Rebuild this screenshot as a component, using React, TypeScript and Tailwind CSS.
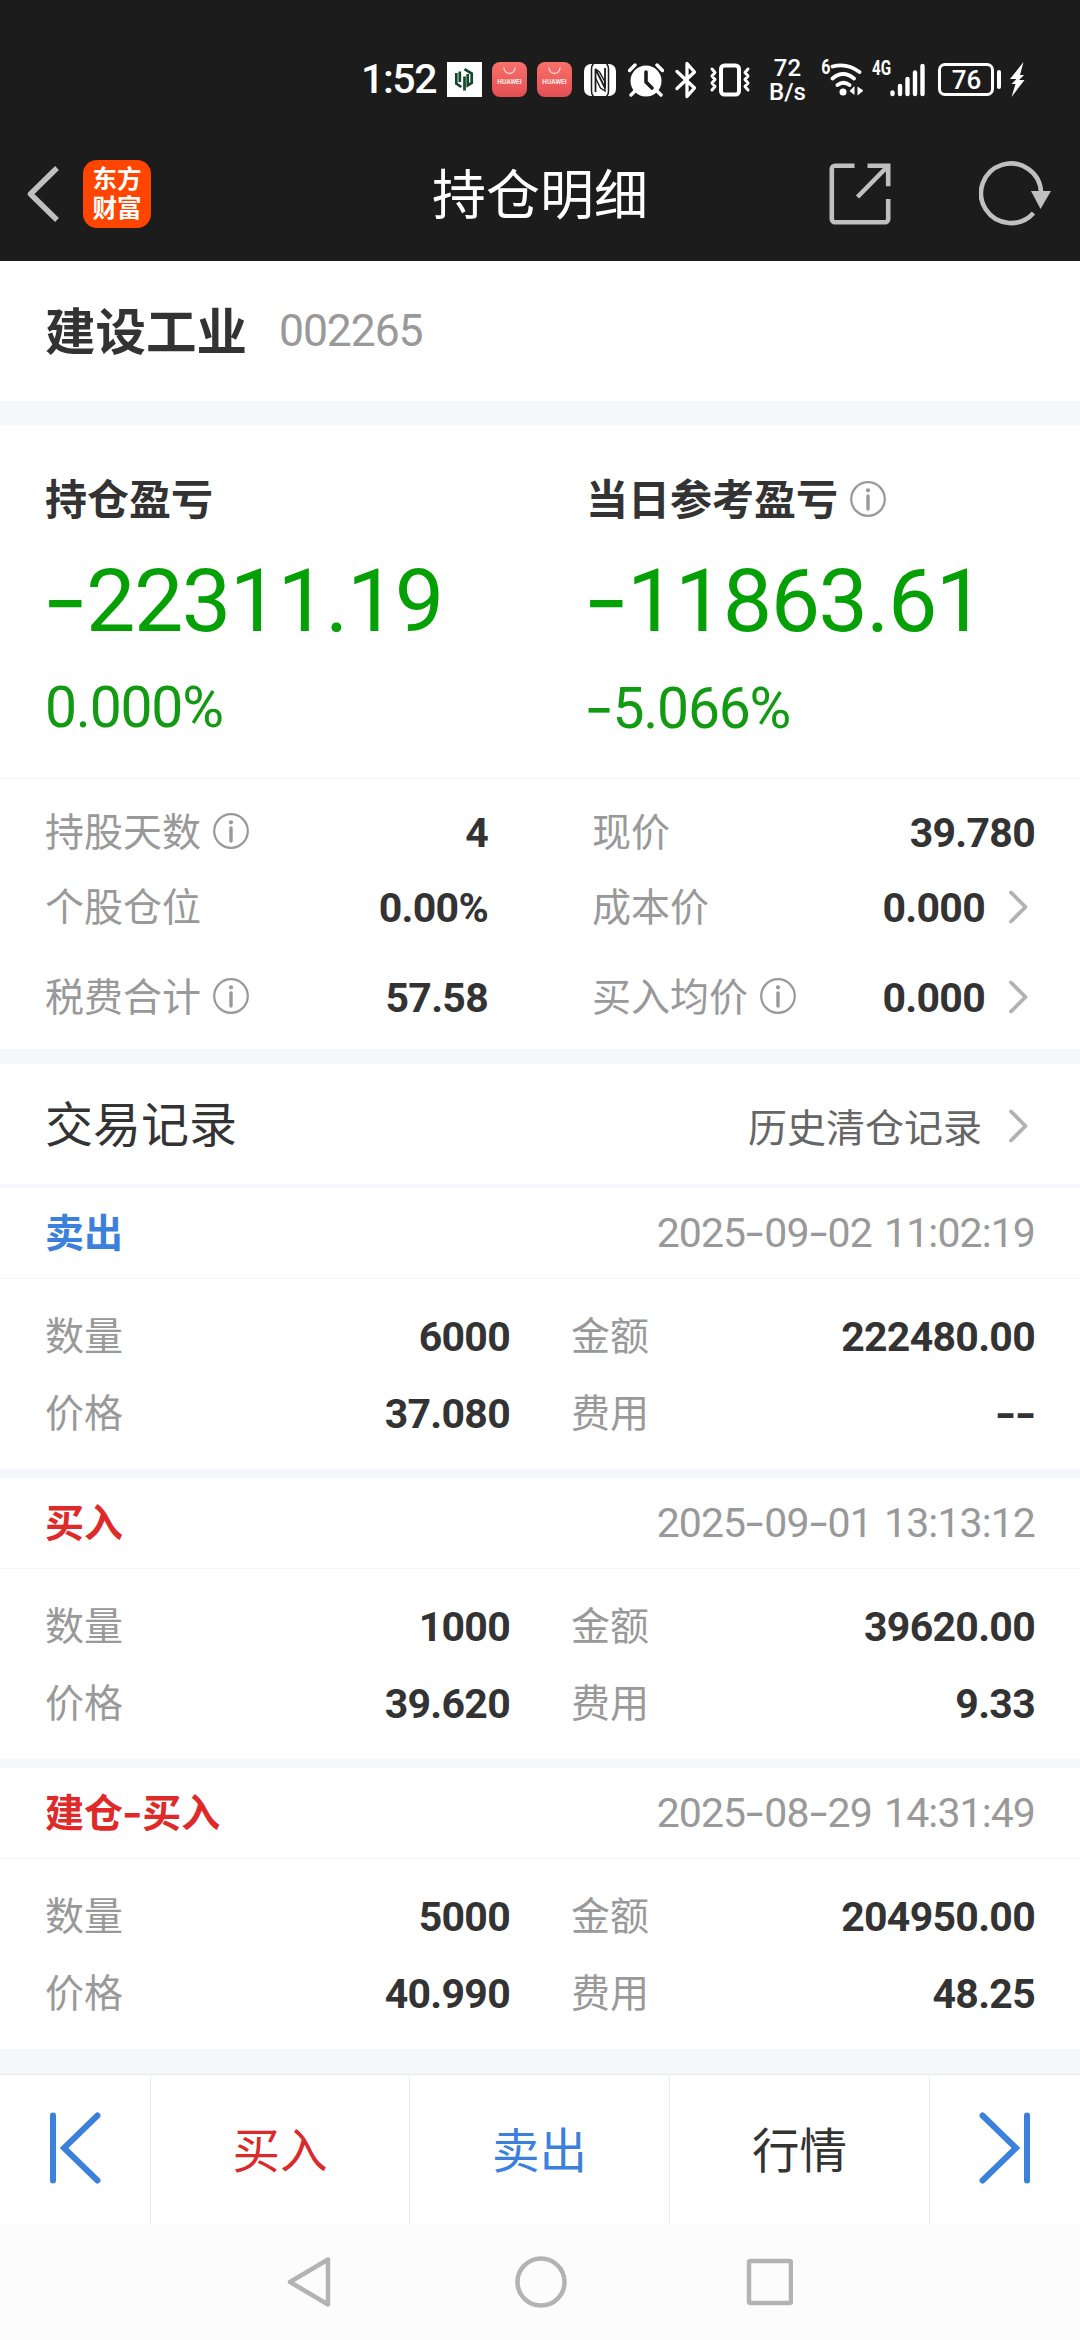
import type { ReactNode } from 'react';

interface TradeRecord {
  type: string;
  color: string;
  time: string;
  amount: string;
  price: string;
  total: string;
  fee: string;
}

const records: TradeRecord[] = [
  {
    type: '卖出',
    color: 'text-[#3b81dc]',
    time: '2025-09-02 11:02:19',
    amount: '6000',
    price: '37.080',
    total: '222480.00',
    fee: '--',
  },
  {
    type: '买入',
    color: 'text-[#e02a2a]',
    time: '2025-09-01 13:13:12',
    amount: '1000',
    price: '39.620',
    total: '39620.00',
    fee: '9.33',
  },
  {
    type: '建仓-买入',
    color: 'text-[#e02a2a]',
    time: '2025-08-29 14:31:49',
    amount: '5000',
    price: '40.990',
    total: '204950.00',
    fee: '48.25',
  },
];

// Hyphens use the wider Inter dash
function Num({ children, className = '' }: { children: string; className?: string }) {
  return (
    <span className={`whitespace-pre ${className}`}>
      {children.split(/(-)/).map((part, index) =>
        part === '-' ? (
          <span key={index} className="mr-[0.025em] inline-block scale-x-115 font-['Inter'] leading-none">
            -
          </span>
        ) : (
          part
        ),
      )}
    </span>
  );
}

function InfoIcon() {
  return (
    <svg width="36" height="36" viewBox="0 0 36 36" fill="none" className="shrink-0">
      <circle cx="18" cy="18" r="16.8" stroke="#999" strokeWidth="2.2" />
      <circle cx="18" cy="9.3" r="2.1" fill="#999" />
      <path d="M18 15v13" stroke="#999" strokeWidth="3.4" strokeLinecap="round" />
    </svg>
  );
}

function Chevron() {
  return (
    <svg width="19" height="34" viewBox="0 0 19 34" fill="none" className="shrink-0">
      <path d="M2 2.5 16.5 17 2 31.5" stroke="#b2b2b2" strokeWidth="3.8" strokeLinecap="round" strokeLinejoin="round" />
    </svg>
  );
}

function HuaweiApp() {
  return (
    <div className="flex h-[35px] w-[35px] flex-col items-center rounded-[8px] bg-gradient-to-b from-[#f9706a] to-[#e34f54]">
      <svg width="13" height="8" viewBox="0 0 13 8" fill="none" className="mt-[5px]">
        <path d="M1 1a5.5 5.5 0 0 0 11 0" stroke="#ffd9d5" strokeWidth="1.3" strokeLinecap="round" />
      </svg>
      <span className="mt-[4px] text-[6.5px] leading-[7px] font-bold text-[#ffe9e6]">HUAWEI</span>
    </div>
  );
}

function StatusBar() {
  return (
    <div className="flex h-[127px] items-center pt-[32px] pl-[361px] text-white">
      <Num className="w-[86px] text-[41px] leading-none font-medium tracking-[-1.4px]">1:52</Num>
      <svg width="35" height="35" viewBox="0 0 35 35" fill="none">
        <path d="M0 0h35v35H0z" fill="#fff" />
        <path d="M9.3 11v10.500l5 3.500M17.500 14.500V28.500M12.800 9.500v10.500M17.500 7.200l7.200 4.300v9.500l-4 2.300V12" stroke="#12492c" strokeWidth="2.700" />
      </svg>
      <div className="ml-[10px] flex gap-[10px]">
        <HuaweiApp />
        <HuaweiApp />
      </div>
      <svg width="32" height="32" viewBox="0 0 32 32" fill="none" className="ml-[12px]">
        <rect width="32" height="32" rx="7" fill="#fff" />
        <path d="M9.500 0Q7.500 1 7.500 5v22q0 4 2 5M22.500 0q2 1 2 5v22q0 4-2 5" stroke="#1c1c1c" strokeWidth="1.500" />
        <path d="M11.500 28V5L21 24V4" stroke="#1c1c1c" strokeWidth="1.800" />
        <path d="M11.500 5l4 3L21 18v9l-4.500-3-5-10" stroke="#1c1c1c" strokeWidth="1.400" />
      </svg>
      <svg width="36" height="34" viewBox="0 0 36 34" fill="none" className="ml-[12px]">
        <circle cx="18" cy="18" r="15.500" fill="#fff" />
        <path d="M1.500 7.500 7 2M34.500 7.500 29 2M7 28l-4 4M29 28l4 4" stroke="#fff" strokeWidth="3.400" strokeLinecap="round" />
        <path d="M18 9v10l6 6" stroke="#1c1c1c" strokeWidth="3.600" strokeLinecap="round" strokeLinejoin="round" />
      </svg>
      <svg width="24" height="38" viewBox="0 0 24 38" fill="none" className="ml-[10px]">
        <path d="M3 10.500 20.500 27 13 35.500v-33L20.500 11 3 27.500" stroke="#fff" strokeWidth="3.300" strokeLinecap="round" strokeLinejoin="round" />
      </svg>
      <svg width="42" height="34" viewBox="0 0 42 34" fill="none" className="ml-[11px]">
        <rect x="12" y="2.500" width="18" height="29" rx="3.500" stroke="#fff" strokeWidth="4" />
        <path d="M3 6l3 3.500-3 3.500 3 3.500-3 3.500 3 3.500-3 3.500M39 6l-3 3.500 3 3.500-3 3.500 3 3.500-3 3.500 3 3.500" stroke="#fff" strokeWidth="3" strokeLinejoin="round" strokeLinecap="round" />
      </svg>
      <div className="ml-[17px] flex w-[39px] flex-col items-center text-[24px] leading-[24px] font-medium">
        <span>72</span>
        <span>B/s</span>
      </div>
      <span className="ml-[13px] self-start pt-[25px] text-[20px] leading-none font-bold">
        <span className="inline-block scale-x-80">6</span>
      </span>
      <svg width="34" height="35" viewBox="0 0 34 35" fill="none" className="-ml-[2px]">
        <path d="M3.500 4.500Q18 .500 30.500 10M3.500 16.500q10.500-9 21.500 0M8.500 23q6-4.500 12 0" stroke="#fff" strokeWidth="3.800" strokeLinecap="round" />
        <circle cx="14" cy="30" r="3.500" fill="#fff" />
        <path d="M25.500 24v9l-5-4zM28.500 24.500v9l6-5z" fill="#fff" />
      </svg>
      <span className="ml-[9px] w-[18px] self-start pt-[26px] text-[20px] leading-none font-bold">
        <span className="inline-block origin-left scale-x-76">4G</span>
      </span>
      <svg width="36" height="34" viewBox="0 0 36 34" fill="none">
        <path d="M2.500 29.500v1.500M10 23v8M17.500 16v15M25 9.500V31M32.500 3v28" stroke="#fff" strokeWidth="4.400" strokeLinecap="round" />
      </svg>
      <div className="ml-[12px] flex h-[33px] w-[56px] items-center justify-center rounded-[7px] border-[3px] border-white text-[26px] leading-none font-medium">
        76
      </div>
      <div className="ml-[3px] h-[19px] w-[4px] rounded-full bg-white" />
      <svg width="15" height="36" viewBox="0 0 15 36" className="ml-[9px]">
        <path d="M13.500 0 0 17h6.500l-5 5h4L1.500 35 14.500 18H9l5-5h-4z" fill="#fff" />
      </svg>
    </div>
  );
}

function TitleBar() {
  return (
    <div className="grid h-[134px] grid-cols-[1fr_216px_1fr] items-center">
      <div className="flex items-center pl-[27px]">
        <svg width="33" height="56" viewBox="0 0 33 56" fill="none">
          <path d="M30 2 3.500 28 30 54" stroke="#c0c0c0" strokeWidth="5.500" strokeLinejoin="round" />
        </svg>
        <div className="ml-[23px] flex h-[68px] w-[68px] flex-col items-center justify-center rounded-[14px] bg-[#ff4500] text-[24.500px] leading-[29px] font-bold text-white">
          <span>东方</span>
          <span>财富</span>
        </div>
      </div>
      <h1 className="pt-[6px] text-[54px] leading-none whitespace-nowrap text-white">持仓明细</h1>
      <div className="flex items-center justify-end pr-[29px]">
        <svg width="62" height="62" viewBox="0 0 62 62" fill="none" stroke="#c0c0c0" strokeWidth="4.600">
          <path d="M25.500 2.800H6a3.200 3.200 0 0 0-3.200 3.200v50A3.200 3.200 0 0 0 6 59.200h50a3.200 3.200 0 0 0 3.200-3.200V36" />
          <path d="M38.500 2.800h20.700v20.500M58 4 28.500 34" />
        </svg>
        <svg width="72" height="66" viewBox="0 0 72 66" fill="none" className="ml-[88px]">
          <path d="M54.500 52A30 29.800 0 1 1 62 31" stroke="#c0c0c0" strokeWidth="4.600" />
          <path d="M52 30h20L61.500 48z" fill="#c0c0c0" />
        </svg>
      </div>
    </div>
  );
}

function Stat({ label, value, info, arrow }: { label: string; value: string; info?: boolean; arrow?: boolean }) {
  return (
    <div className="flex items-center">
      <span className="text-[39px] text-[#999]">{label}</span>
      {info && (
        <span className="-mt-[5px] ml-[12px]">
          <InfoIcon />
        </span>
      )}
      <Num className="ml-auto text-[41px] font-bold tracking-[-0.7px]">{value}</Num>
      {arrow && (
        <span className="mr-[7px] ml-[24px] -mt-[3px]">
          <Chevron />
        </span>
      )}
    </div>
  );
}

function Profit({ title, value, percent, info }: { title: string; value: string; percent: string; info?: boolean }) {
  return (
    <div className="flex flex-col pt-[55px]">
      <div className="flex items-center text-[42px] leading-none font-bold">
        {title}
        {info && (
          <span className="-mt-[5px] ml-[12px]">
            <InfoIcon />
          </span>
        )}
      </div>
      <Num className="mt-[33px] text-[88px] leading-none tracking-[-1.6px] text-[#05a005]">{value}</Num>
      <Num className="mt-[34px] text-[57px] leading-none tracking-[-1.2px] text-[#129a12]">{percent}</Num>
    </div>
  );
}

function RecordCard({ record }: { record: TradeRecord }) {
  return (
    <article className="h-[281px] bg-white">
      <div className="flex h-[91px] items-center justify-between border-b border-[#f5f5f7] px-[45px]">
        <Num className={`pt-[3px] text-[39px] font-bold ${record.color}`}>{record.type}</Num>
        <Num className="pt-[1px] text-[41px] tracking-[-0.9px] text-[#999] [word-spacing:3px]">{record.time}</Num>
      </div>
      <div className="grid grid-cols-[465px_464px] gap-x-[61px] px-[45px] pt-[20px] leading-[77px]">
        <Stat label="数量" value={record.amount} />
        <Stat label="金额" value={record.total} />
        <Stat label="价格" value={record.price} />
        <Stat label="费用" value={record.fee} />
      </div>
    </article>
  );
}

function Tab({ children, className = '' }: { children: ReactNode; className?: string }) {
  return (
    <button type="button" className={`flex items-center justify-center border-r border-[#ebecef] ${className}`}>
      {children}
    </button>
  );
}

export default function App() {
  return (
    <div className="flex h-[2340px] w-[1080px] flex-col overflow-hidden bg-[#f6f7fa] font-['Roboto','Noto_Sans_CJK_SC',sans-serif] text-[#333]">
      <header className="h-[261px] bg-[#1c1c1c]">
        <StatusBar />
        <TitleBar />
      </header>

      <section className="flex h-[140px] items-center bg-white pl-[45px]">
        <h2 className="pt-[5px] text-[50.500px] leading-none font-bold">建设工业</h2>
        <Num className="ml-[32px] pt-[1px] text-[44.500px] leading-none tracking-[-1.100px] text-[#999]">002265</Num>
      </section>

      <section className="mt-[24px] grid h-[353px] grid-cols-[541px_1fr] bg-white pl-[45px]">
        <Profit title="持仓盈亏" value="-22311.19" percent="0.000%" />
        <Profit title="当日参考盈亏" value="-11863.61" percent="-5.066%" info />
      </section>

      <section className="h-[271px] border-t border-[#f5f5f7] bg-white px-[45px] pt-[17px]">
        <div className="grid grid-cols-[443px_443px] gap-x-[104px] leading-[75px]">
          <Stat label="持股天数" value="4" info />
          <Stat label="现价" value="39.780" />
          <Stat label="个股仓位" value="0.00%" />
          <Stat label="成本价" value="0.000" arrow />
        </div>
        <div className="mt-[15px] grid grid-cols-[443px_443px] gap-x-[104px] leading-[75px]">
          <Stat label="税费合计" value="57.58" info />
          <Stat label="买入均价" value="0.000" info arrow />
        </div>
      </section>

      <section className="mt-[15px]">
        <div className="flex h-[120px] items-center bg-white pr-[52px] pl-[45px] leading-none">
          <h3 className="pt-[3px] text-[48px]">交易记录</h3>
          <span className="ml-auto pt-[10px] text-[39px] text-[#666]">历史清仓记录</span>
          <span className="ml-[27px] pt-[4px]">
            <Chevron />
          </span>
        </div>
        <div className="mt-[4px] flex flex-col gap-[9px]">
          {records.map((record) => (
            <RecordCard key={record.time} record={record} />
          ))}
        </div>
      </section>

      <nav className="mt-[25px] grid h-[150px] grid-cols-[151px_259px_260px_260px_150px] border-t border-[#e6e8ec] bg-white text-[47.500px] leading-none">
        <Tab>
          <svg width="52" height="72" viewBox="0 0 52 72" fill="none" stroke="#3b81dc" strokeWidth="6" strokeLinecap="round" className="mb-[4px]">
            <path d="M4 3.500v65M48.500 3.500 15 36l33.500 32.500" />
          </svg>
        </Tab>
        <Tab className="pt-[6px] text-[#d92b2b]">买入</Tab>
        <Tab className="pt-[6px] text-[#3b81dc]">卖出</Tab>
        <Tab className="pt-[6px]">行情</Tab>
        <button type="button" className="flex items-center justify-center">
          <svg width="52" height="72" viewBox="0 0 52 72" fill="none" stroke="#3b81dc" strokeWidth="6" strokeLinecap="round" className="mb-[4px]">
            <path d="M48 3.500v65M3.500 3.500 37 36 3.500 68.500" />
          </svg>
        </button>
      </nav>

      <footer className="flex h-[116px] items-center justify-center bg-[#fcfcfc]">
        <svg width="506" height="52" viewBox="0 0 506 52" fill="none" stroke="#b3b3b3" strokeWidth="4.500" strokeLinejoin="round">
          <path d="M3 26 41 3.500v45z" />
          <circle cx="254" cy="26" r="23.500" />
          <rect x="462" y="5" width="42" height="42" rx="1.500" />
        </svg>
      </footer>
    </div>
  );
}
